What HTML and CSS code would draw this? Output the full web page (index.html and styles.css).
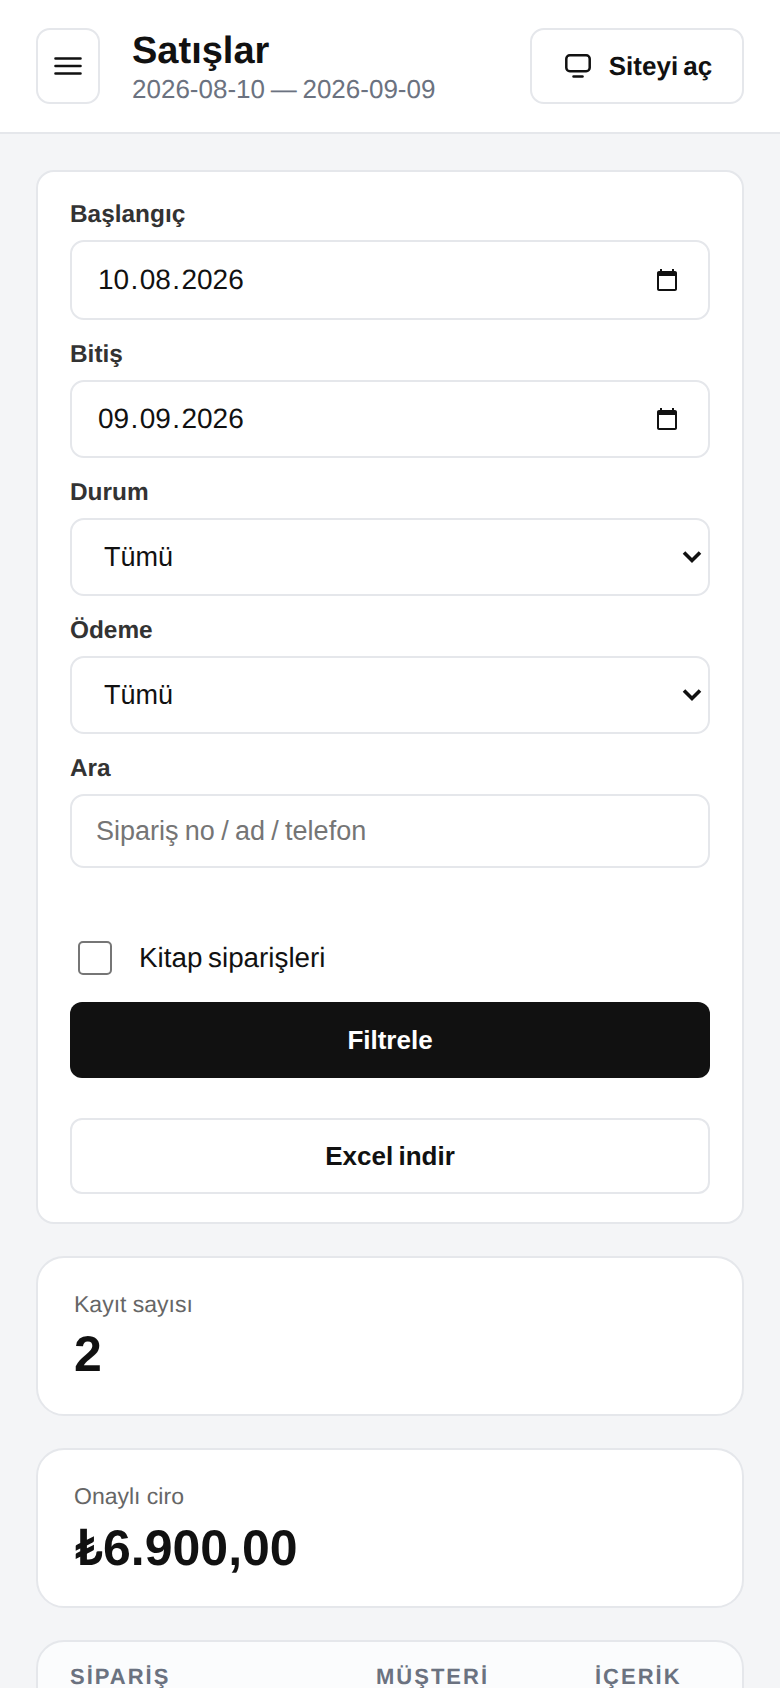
FILE: index.html
```html
<!DOCTYPE html>
<html lang="tr">
<head>
<meta charset="utf-8">
<title>Satışlar</title>
<link rel="stylesheet" href="styles.css">
</head>
<body>
<header class="topbar">
  <button class="menu-btn" type="button" aria-label="Menü">
    <svg class="menu-icon" viewBox="0 0 28 18" width="28" height="18"><path d="M1.500 1.500h25M1.500 9h25M1.500 16.500h25"/></svg>
  </button>
  <div class="title-block">
    <h1 class="page-title">Satışlar</h1>
    <div class="page-range">2026-08-10 — 2026-09-09</div>
  </div>
  <a class="site-btn" href="#">
    <svg class="tv-icon" viewBox="0 0 26 24" width="26" height="24"><rect x="1.300" y="1.300" width="23.400" height="15.900" rx="3.500"/><path d="M8.500 22.400h9"/></svg>
    <span>Siteyi aç</span>
  </a>
</header>

<main class="content">
  <form class="card filters">
    <label class="field-label">Başlangıç</label>
    <div class="control date-control first">
      <span class="date-value">10<span class="date-sep">.</span>08<span class="date-sep">.</span>2026</span>
      <svg class="cal-icon" viewBox="0 0 24 24" width="24" height="24"><path d="M20 3h-1V1h-2v2H7V1H5v2H4c-1.100 0-2 .9-2 2v16c0 1.100.9 2 2 2h16c1.100 0 2-.9 2-2V5c0-1.100-.9-2-2-2zm0 18H4V8h16v13z"/></svg>
    </div>
    <label class="field-label">Bitiş</label>
    <div class="control date-control">
      <span class="date-value">09<span class="date-sep">.</span>09<span class="date-sep">.</span>2026</span>
      <svg class="cal-icon" viewBox="0 0 24 24" width="24" height="24"><path d="M20 3h-1V1h-2v2H7V1H5v2H4c-1.100 0-2 .9-2 2v16c0 1.100.9 2 2 2h16c1.100 0 2-.9 2-2V5c0-1.100-.9-2-2-2zm0 18H4V8h16v13z"/></svg>
    </div>
    <label class="field-label">Durum</label>
    <div class="select-wrap">
      <select class="control select-control"><option>Tümü</option></select>
      <svg class="chevron" viewBox="0 0 20 14" width="20" height="14"><path d="M2 2.500l8 8 8-8"/></svg>
    </div>
    <label class="field-label">Ödeme</label>
    <div class="select-wrap">
      <select class="control select-control"><option>Tümü</option></select>
      <svg class="chevron" viewBox="0 0 20 14" width="20" height="14"><path d="M2 2.500l8 8 8-8"/></svg>
    </div>
    <label class="field-label">Ara</label>
    <input class="control search-control" type="text" placeholder="Sipariş no / ad / telefon">
    <label class="check-row">
      <input class="check-box" type="checkbox">
      <span>Kitap siparişleri</span>
    </label>
    <button class="btn btn-primary" type="button">Filtrele</button>
    <button class="btn btn-outline" type="button">Excel indir</button>
  </form>

  <section class="card stat">
    <div class="stat-label">Kayıt sayısı</div>
    <div class="stat-value">2</div>
  </section>
  <section class="card stat">
    <div class="stat-label">Onaylı ciro</div>
    <div class="stat-value"><span class="lira">₺</span>6.900,00</div>
  </section>

  <section class="card table-card">
    <div class="table-head">
      <span>SİPARİŞ</span>
      <span>MÜŞTERİ</span>
      <span>İÇERİK</span>
    </div>
  </section>
</main>
</body>
</html>
```
FILE: styles.css
```css
* { box-sizing: border-box; }
html, body { margin: 0; height: 1688px; overflow: hidden; }
body {
  background: #f4f5f7;
  color: #111111;
  font-family: "Liberation Sans", Arial, sans-serif;
  text-rendering: geometricPrecision;
}
.topbar {
  height: 134px;
  padding: 28px 36px 0;
  background: #ffffff;
  border-bottom: 2px solid #e5e7eb;
  display: flex;
  align-items: flex-start;
}
.menu-btn {
  width: 64px;
  height: 76px;
  padding: 0;
  background: #ffffff;
  border: 2px solid #e5e7eb;
  border-radius: 14px;
  display: flex;
  align-items: center;
  justify-content: center;
}
.menu-icon { fill: none; stroke: #111111; stroke-width: 2.600; stroke-linecap: round; }
.title-block { margin-left: 32px; flex: 1; }
.page-title { margin: 0; font-size: 38px; line-height: 46px; font-weight: 700; }
.page-range { font-size: 26px; line-height: 30px; color: #6b7280; word-spacing: -1.500px; }
.site-btn {
  width: 214px;
  height: 76px;
  padding-left: 3px;
  background: #ffffff;
  border: 2px solid #e5e7eb;
  border-radius: 14px;
  display: flex;
  align-items: center;
  justify-content: center;
  gap: 18px;
  color: #111111;
  font-size: 26px;
  font-weight: 700;
  word-spacing: -2px;
  text-decoration: none;
}
.tv-icon { fill: none; stroke: #111111; stroke-width: 2.500; stroke-linecap: round; }
.content { padding: 36px 36px 0; display: flex; flex-direction: column; gap: 32px; }
.card { background: #ffffff; border: 2px solid #e5e7eb; border-radius: 18px; }
.filters { padding: 29px 32px 28px; display: flex; flex-direction: column; }
.field-label { font-size: 24.400px; line-height: 28px; font-weight: 700; color: #333333; margin-bottom: 11px; }
.control {
  width: 100%;
  height: 78px;
  margin-bottom: 21px;
  background: #ffffff;
  border: 2px solid #e5e7eb;
  border-radius: 14px;
  color: #111111;
  font-family: inherit;
  font-size: 27px;
  word-spacing: -1px;
}
.date-control { display: flex; align-items: center; justify-content: space-between; padding: 0 29px 0 26px; }
.date-control.first { height: 80px; }
.date-value { font-size: 28px; }
.date-sep { padding: 0 1.400px; }
.cal-icon { fill: #111111; }
.select-wrap { position: relative; }
.select-control { display: block; appearance: none; padding: 0 32px; }
.chevron {
  position: absolute;
  top: 32px;
  right: 8px;
  fill: none;
  stroke: #111111;
  stroke-width: 3.600;
}
.search-control { height: 74px; padding: 0 24px; margin-bottom: 0; outline: none; word-spacing: -1.200px; }
.search-control::placeholder { color: #757575; }
.check-row { display: flex; align-items: center; gap: 27px; margin: 73px 0 27px 8px; height: 34px; font-size: 27.800px; word-spacing: -2px; }
.check-box { appearance: none; width: 34px; height: 34px; margin: 0; background: #ffffff; border: 2px solid #767676; border-radius: 5px; }
.btn {
  width: 100%;
  height: 76px;
  border-radius: 12px;
  font-family: inherit;
  font-size: 26px;
  font-weight: 700;
  word-spacing: -2px;
}
.btn-primary { background: #111111; color: #ffffff; border: 0; margin-bottom: 40px; }
.btn-outline { background: #ffffff; color: #111111; border: 2px solid #e5e7eb; }
.stat { height: 160px; padding: 32px 36px 0; border-radius: 28px; }
.stat-label { font-size: 23px; line-height: 28px; color: #666666; }
.stat-value { margin-top: 7px; font-size: 50px; line-height: 58px; font-weight: 700; color: #111111; }
.lira { font-family: Lato, "Liberation Sans", sans-serif; }
.table-card { background: #fbfcfd; height: 100px; border-radius: 28px; }
.table-head {
  display: grid;
  grid-template-columns: 306px 219px 1fr;
  padding: 22px 32px 0;
  font-size: 22px;
  font-weight: 700;
  letter-spacing: 2px;
  color: #6b7280;
}
```
